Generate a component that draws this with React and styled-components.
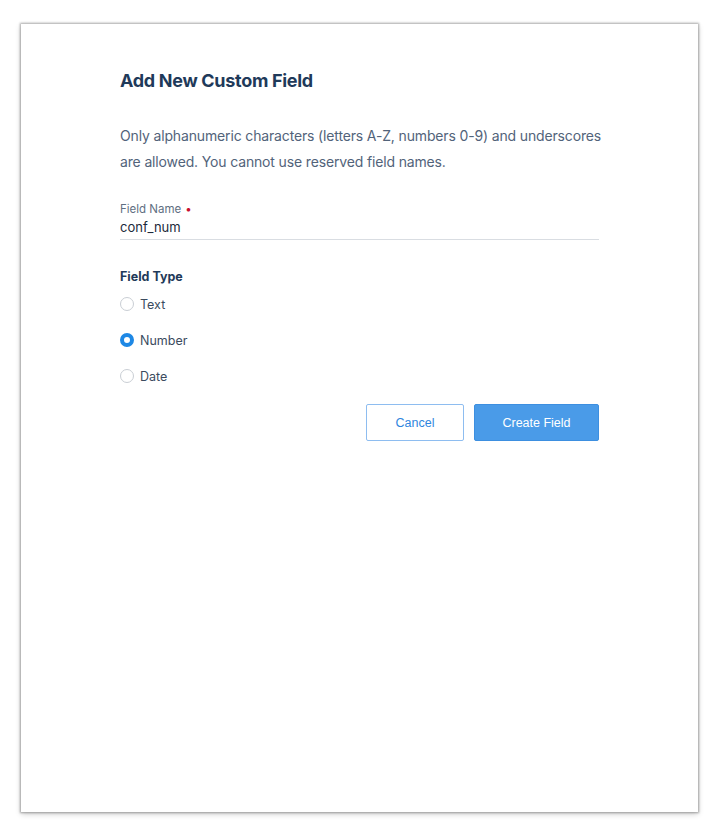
import styled, { createGlobalStyle } from "styled-components";

const GlobalStyle = createGlobalStyle`
  html, body {
    margin: 0;
    padding: 0;
    background: #ffffff;
  }
  body {
    font-family: "Inter", "Liberation Sans", sans-serif;
  }
`;

const Page = styled.div`
  width: 720px;
  height: 837px;
  padding: 24px 22px 25px 21px;
  box-sizing: border-box;
`;

const Card = styled.div`
  width: 677px;
  height: 788px;
  background: #ffffff;
  box-shadow: 0 0 2px 1px rgba(0, 0, 0, 0.3), 0 2px 6px rgba(0, 0, 0, 0.2);
  padding: 45px 99px 0 99px;
  box-sizing: border-box;
`;

const Title = styled.h2`
  margin: 0;
  font-size: 18px;
  font-weight: 700;
  letter-spacing: -0.3px;
  color: #1f3a5a;
  line-height: 24px;
`;

const Intro = styled.p`
  margin: 30px -4px 0 0;
  font-size: 14px;
  letter-spacing: -0.15px;
  line-height: 26px;
  color: #52637a;
`;

const FieldWrap = styled.div`
  margin-top: 26px;
  border-bottom: 1px solid #d9dde2;
  padding-bottom: 2px;
`;

const Label = styled.div`
  font-size: 11.5px;
  color: #5f6f82;
  line-height: 16px;
`;

const Required = styled.span`
  color: #c8102e;
  margin-left: 4px;
`;

const Value = styled.div`
  font-size: 13px;
  color: #1b2a3b;
  line-height: 20px;
`;

const GroupTitle = styled.div`
  margin-top: 28px;
  font-size: 12.5px;
  font-weight: 700;
  color: #1f3a5a;
  line-height: 18px;
`;

const RadioList = styled.div`
  display: flex;
  flex-direction: column;
  gap: 16px;
  margin-top: 8px;
`;

const RadioRow = styled.label`
  display: flex;
  align-items: center;
  gap: 6px;
  height: 20px;
  font-size: 12.5px;
  color: #3b4b5e;
`;

const Dot = styled.span`
  width: 14px;
  height: 14px;
  border-radius: 50%;
  box-sizing: border-box;
  border: ${(p) => (p.checked ? "4px solid #1e88e5" : "1px solid #c9ced4")};
  background: #ffffff;
`;

const Actions = styled.div`
  display: flex;
  justify-content: flex-end;
  gap: 10px;
  margin-top: 18px;
  padding-right: 0;
`;

const Button = styled.button`
  height: 37px;
  border-radius: 2px;
  font-family: "Liberation Sans", "Inter", sans-serif;
  font-size: 12.5px;
  cursor: pointer;
  box-sizing: border-box;
  width: ${(p) => (p.primary ? "125px" : "98px")};
  background: ${(p) => (p.primary ? "#4a9be8" : "#ffffff")};
  color: ${(p) => (p.primary ? "#ffffff" : "#2f86de")};
  border: 1px solid ${(p) => (p.primary ? "#3d8fe0" : "#8ebdf0")};
`;

const types = [
  { name: "Text", checked: false },
  { name: "Number", checked: true },
  { name: "Date", checked: false },
];

export default function App() {
  return (
    <>
      <GlobalStyle />
      <Page>
        <Card>
          <Title>Add New Custom Field</Title>
          <Intro>
            Only alphanumeric characters (letters A-Z, numbers 0-9) and underscores
            are allowed. You cannot use reserved field names.
          </Intro>
          <FieldWrap>
            <Label>
              Field Name<Required>•</Required>
            </Label>
            <Value>conf_num</Value>
          </FieldWrap>
          <GroupTitle>Field Type</GroupTitle>
          <RadioList>
            {types.map((t) => (
              <RadioRow key={t.name}>
                <Dot checked={t.checked} />
                {t.name}
              </RadioRow>
            ))}
          </RadioList>
          <Actions>
            <Button>Cancel</Button>
            <Button primary>Create Field</Button>
          </Actions>
        </Card>
      </Page>
    </>
  );
}
